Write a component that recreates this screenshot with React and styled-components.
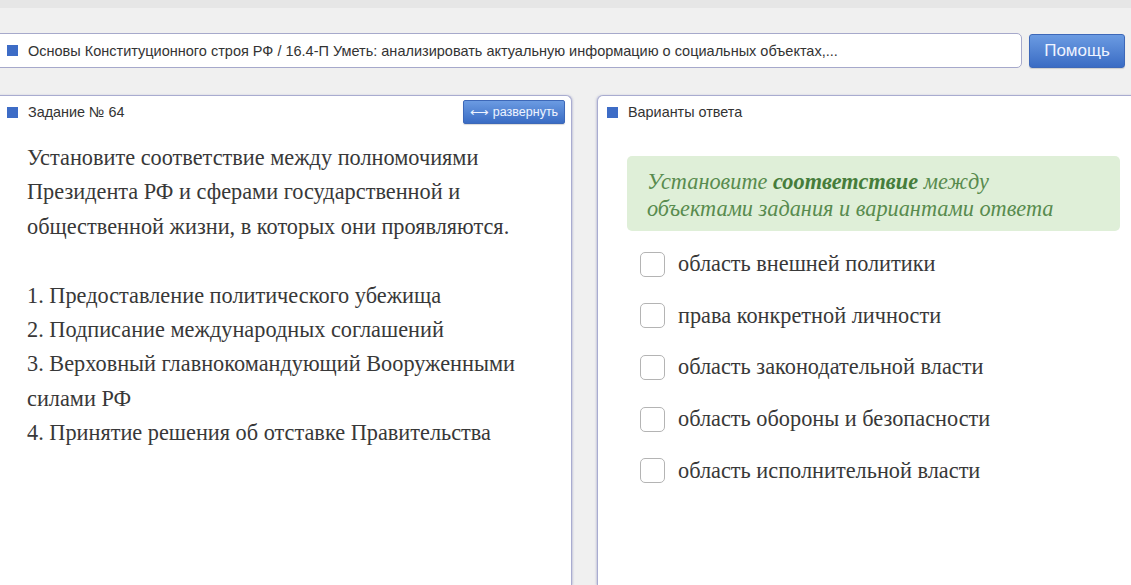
import React from "react";
import styled, { createGlobalStyle } from "styled-components";

const Global = createGlobalStyle`
  html, body { margin: 0; padding: 0; }
  body {
    background: #f0f0f0;
    overflow: hidden;
    font-family: "Liberation Sans", Arial, sans-serif;
    width: 1131px;
    height: 585px;
  }
`;

const Page = styled.div`
  width: 1131px;
  height: 585px;
  overflow: hidden;
  display: flex;
  flex-direction: column;
`;

const TopStrip = styled.div`
  height: 8px;
  background: #e6e6e6;
  overflow: hidden;
  flex-shrink: 0;
`;

const TopicRow = styled.div`
  margin: 25px 6px 0 -6px;
  display: flex;
  gap: 7px;
  height: 35px;
  flex-shrink: 0;
`;

const TopicBar = styled.div`
  flex: 1;
  background: #fff;
  border: 1px solid #a6a9cb;
  border-radius: 5px;
  display: flex;
  align-items: center;
  padding-left: 12px;
  gap: 10px;
  font-size: 14.5px;
  color: #333;
  white-space: nowrap;
  overflow: hidden;
`;

const Square = styled.span`
  width: 11px;
  height: 11px;
  background: #3d6cc6;
  flex-shrink: 0;
`;

const BlueButton = styled.button`
  border: 1px solid #3d68b8;
  border-radius: ${(p) => (p.$small ? "2px" : "3px")};
  background: linear-gradient(#6b9be2, #3a6cc4);
  color: #eef3ff;
  font-family: "Liberation Sans", Arial, sans-serif;
  font-size: ${(p) => (p.$small ? "12.5px" : "17px")};
  padding: 0;
  display: flex;
  align-items: center;
  justify-content: center;
  gap: 4px;
  cursor: pointer;
  box-shadow: 0 1px 1px rgba(0, 0, 0, 0.15);
`;

const HelpButton = styled(BlueButton)`
  width: 96px;
  height: 34px;
  margin-top: 1px;
`;

const ExpandButton = styled(BlueButton)`
  width: 102px;
  height: 24px;
`;

const Panels = styled.div`
  margin: 27px -20px 0 -6px;
  display: grid;
  grid-template-columns: 578px 1fr;
  gap: 25px;
  flex: 1;
`;

const Panel = styled.div`
  background: #fff;
  border: 1px solid #a9acd0;
  border-bottom: none;
  border-radius: ${(p) => (p.$left ? "0 6px 0 0" : "6px 0 0 0")};
  box-shadow: ${(p) => (p.$left ? "1px 0 2px rgba(120,125,180,0.35)" : "-1px 0 2px rgba(120,125,180,0.35)")};
  display: flex;
  flex-direction: column;
`;

const PanelHeader = styled.div`
  height: 32px;
  display: flex;
  align-items: center;
  justify-content: space-between;
  padding: 0 6px 0 ${(p) => p.$pad}px;
`;

const HeaderTitle = styled.div`
  display: flex;
  align-items: center;
  gap: 10px;
  font-size: 14.4px;
  color: #333;
`;

const Body = styled.div`
  padding: 13px 30px 0 32px;
  font-family: "Liberation Serif", "Times New Roman", serif;
  font-size: 22.3px;
  line-height: 34.4px;
  color: #383838;
`;

const Para = styled.p`
  margin: 0 0 34.4px;
`;

const Line = styled.div``;

const AnswerBody = styled.div`
  padding: 28px 30px 0 29px;
  display: flex;
  flex-direction: column;
`;

const Hint = styled.div`
  background: #dfefd8;
  border-radius: 5px;
  padding: 12px 20px 9px;
  font-family: "Liberation Serif", "Times New Roman", serif;
  font-style: italic;
  font-size: 22.3px;
  line-height: 27px;
  color: #588b4e;
  b { font-weight: bold; color: #467d3b; }
`;

const Options = styled.div`
  margin-top: 20px;
  padding-left: 13px;
  display: flex;
  flex-direction: column;
  gap: 25.7px;
`;

const Option = styled.label`
  display: flex;
  align-items: center;
  gap: 13px;
  height: 26px;
  font-family: "Liberation Serif", "Times New Roman", serif;
  font-size: 22.3px;
  color: #383838;
`;

const Check = styled.span`
  width: 23px;
  height: 23px;
  border: 1px solid #b4b4b4;
  border-radius: 5px;
  background: #fff;
  flex-shrink: 0;
`;

const options = [
  "область внешней политики",
  "права конкретной личности",
  "область законодательной власти",
  "область обороны и безопасности",
  "область исполнительной власти",
];

const items = [
  "1. Предоставление политического убежища",
  "2. Подписание международных соглашений",
  "3. Верховный главнокомандующий Вооруженными силами РФ",
  "4. Принятие решения об отставке Правительства",
];

export default function App() {
  return (
    <Page>
      <Global />
      <TopStrip />
      <TopicRow>
        <TopicBar>
          <Square />
          Основы Конституционного строя РФ / 16.4-П Уметь: анализировать актуальную информацию о социальных объектах,...
        </TopicBar>
        <HelpButton>Помощь</HelpButton>
      </TopicRow>
      <Panels>
        <Panel $left>
          <PanelHeader $pad={12}>
            <HeaderTitle>
              <Square />
              Задание № 64
            </HeaderTitle>
            <ExpandButton $small>
              <span>⟷</span>развернуть
            </ExpandButton>
          </PanelHeader>
          <Body>
            <Para>
              Установите соответствие между полномочиями Президента РФ и сферами государственной и общественной жизни, в которых они проявляются.
            </Para>
            {items.map((t) => (
              <Line key={t}>{t}</Line>
            ))}
          </Body>
        </Panel>
        <Panel>
          <PanelHeader $pad={9}>
            <HeaderTitle>
              <Square />
              Варианты ответа
            </HeaderTitle>
          </PanelHeader>
          <AnswerBody>
            <Hint>
              Установите <b>соответствие</b> между
              <br />
              объектами задания и вариантами ответа
            </Hint>
            <Options>
              {options.map((o) => (
                <Option key={o}>
                  <Check />
                  {o}
                </Option>
              ))}
            </Options>
          </AnswerBody>
        </Panel>
      </Panels>
    </Page>
  );
}
